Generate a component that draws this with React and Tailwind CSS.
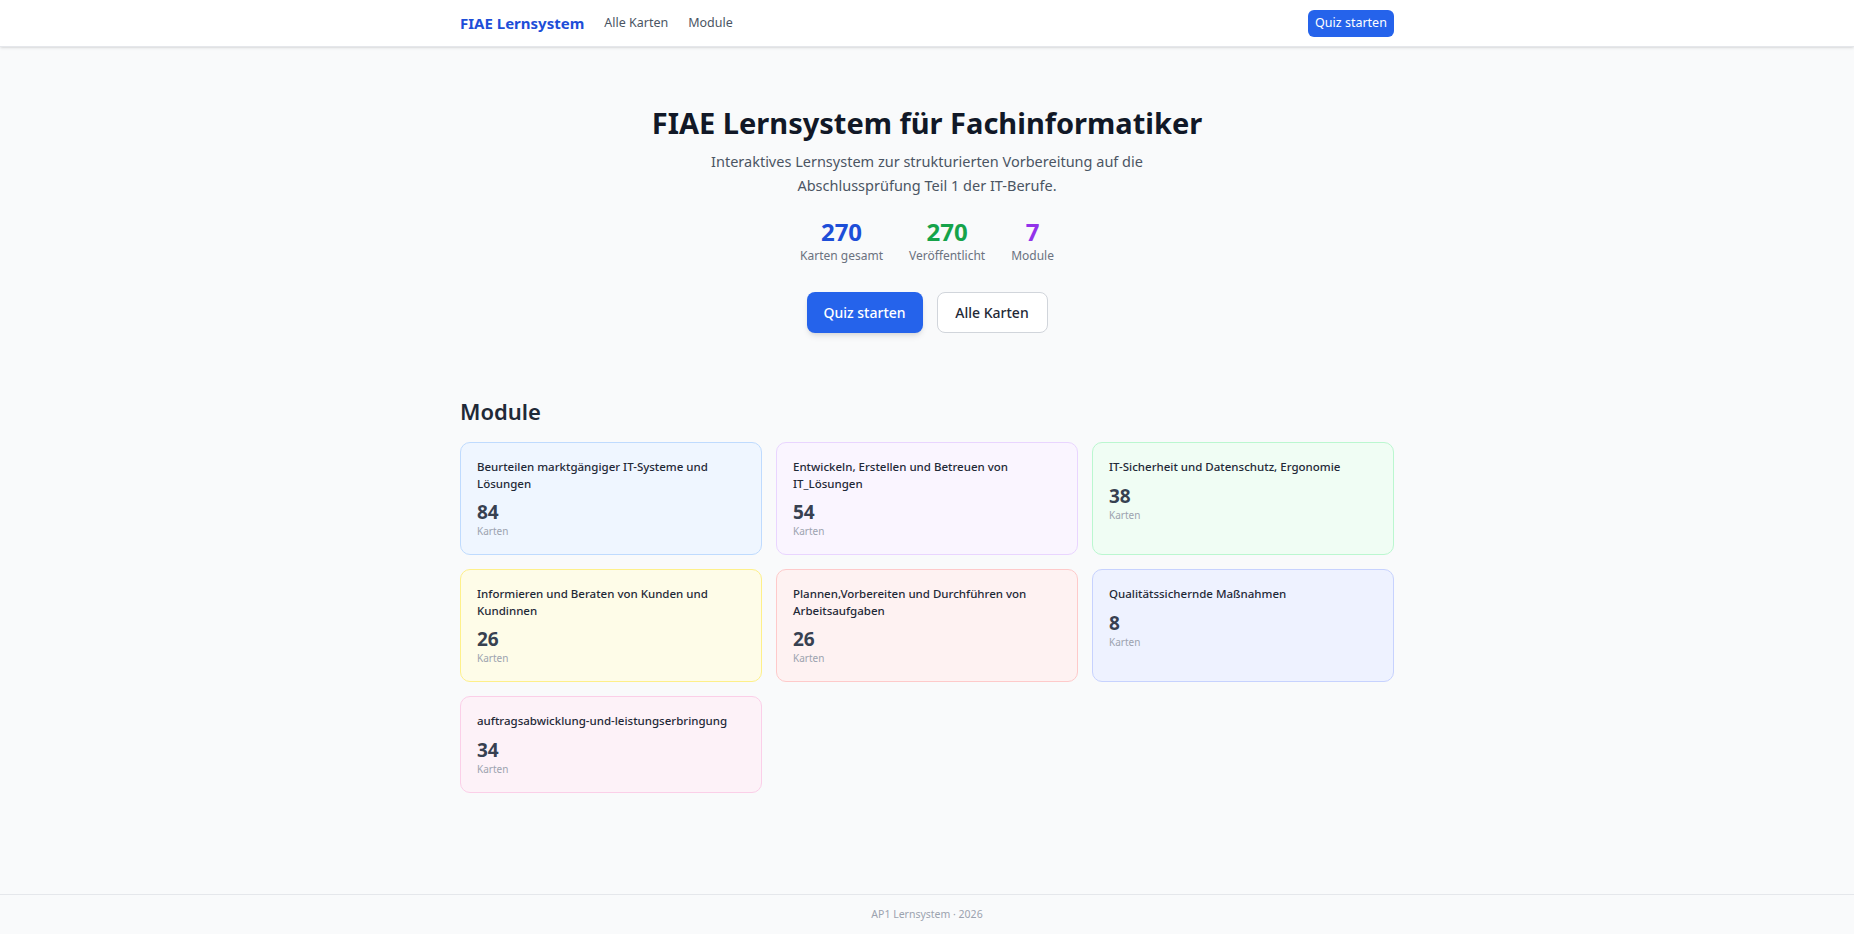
const MODULES = [
  {
    id: 'it-systeme',
    title: 'Beurteilen marktgängiger IT-Systeme und Lösungen',
    count: 84,
    tone: 'border-[#bfdbfe] bg-[#eff6ff]',
  },
  {
    id: 'it-loesungen',
    title: 'Entwickeln, Erstellen und Betreuen von IT_Lösungen',
    count: 54,
    tone: 'border-[#e9d5ff] bg-[#faf5ff]',
  },
  {
    id: 'sicherheit',
    title: 'IT-Sicherheit und Datenschutz, Ergonomie',
    count: 38,
    tone: 'border-[#bbf7d0] bg-[#f0fdf4]',
  },
  {
    id: 'beratung',
    title: 'Informieren und Beraten von Kunden und Kundinnen',
    count: 26,
    tone: 'border-[#fef08a] bg-[#fefce8]',
  },
  {
    id: 'arbeitsaufgaben',
    title: 'Plannen,Vorbereiten und Durchführen von Arbeitsaufgaben',
    count: 26,
    tone: 'border-[#fecaca] bg-[#fef2f2]',
  },
  {
    id: 'qualitaet',
    title: 'Qualitätssichernde Maßnahmen',
    count: 8,
    tone: 'border-[#c7d2fe] bg-[#eef2ff]',
  },
  {
    id: 'auftrag',
    title: 'auftragsabwicklung-und-leistungserbringung',
    count: 34,
    tone: 'border-[#fbcfe8] bg-[#fdf2f8]',
  },
]

const STATS = [
  { id: 'total', value: 270, label: 'Karten gesamt', color: 'text-[#1d4ed8]' },
  { id: 'published', value: 270, label: 'Veröffentlicht', color: 'text-[#16a34a]' },
  { id: 'modules', value: 7, label: 'Module', color: 'text-[#9333ea]' },
]

function Navbar() {
  return (
    <nav className="h-[47px] shrink-0 border-b border-[#e5e7eb] bg-white shadow-sm">
      <div className="mx-auto flex h-full w-[934px] items-center justify-between">
        <div className="flex items-center gap-5">
          <a href="#" className="text-[15px] font-bold text-[#1d4ed8]">
            FIAE Lernsystem
          </a>
          <a href="#" className="text-[12.5px] text-[#4b5563] hover:text-[#111827]">
            Alle Karten
          </a>
          <a href="#" className="text-[12.5px] text-[#4b5563] hover:text-[#111827]">
            Module
          </a>
        </div>
        <button
          type="button"
          className="h-[27px] w-[86px] rounded-md bg-[#2563eb] text-[12.5px] text-white hover:bg-[#1d4ed8]"
        >
          Quiz starten
        </button>
      </div>
    </nav>
  )
}

function Hero() {
  return (
    <section className="flex flex-col items-center pt-[58px] text-center">
      <h1 className="text-[29px] leading-[36px] font-bold text-[#111827]">
        FIAE Lernsystem für Fachinformatiker
      </h1>
      <p className="mt-[9px] max-w-[480px] text-[14.5px] leading-[23.5px] text-[#4b5563]">
        Interaktives Lernsystem zur strukturierten Vorbereitung auf die Abschlussprüfung Teil 1 der IT-Berufe.
      </p>

      <div className="mt-5 flex justify-center gap-[26px]">
        {STATS.map((s) => (
          <div key={s.id} className="flex flex-col items-center">
            <span className={`text-[24px] leading-[30px] font-bold ${s.color}`}>{s.value}</span>
            <span className="mt-px text-[12px] leading-4 text-[#6b7280]">{s.label}</span>
          </div>
        ))}
      </div>

      <div className="mt-7 flex justify-center gap-3.5">
        <button
          type="button"
          className="h-[41px] w-[116px] rounded-lg bg-[#2563eb] text-[14px] font-medium text-white shadow-md hover:bg-[#1d4ed8]"
        >
          Quiz starten
        </button>
        <button
          type="button"
          className="h-[41px] w-[111px] rounded-lg border border-[#d1d5db] bg-white text-[14px] font-medium text-[#1f2937] hover:bg-[#f9fafb]"
        >
          Alle Karten
        </button>
      </div>
    </section>
  )
}

function ModuleCard({ title, count, tone }) {
  return (
    <div className={`rounded-[10px] border p-4 ${tone}`}>
      <h3 className="text-[11.5px] leading-[16.5px] font-medium text-[#1f2937]">{title}</h3>
      <div className="mt-2 text-[19px] leading-6 font-bold text-[#374151]">{count}</div>
      <div className="text-[10px] leading-[14px] text-[#9ca3af]">Karten</div>
    </div>
  )
}

export default function App() {
  return (
    <div className="flex min-h-screen flex-col bg-[#f9fafb] font-['Noto_Sans',sans-serif]">
      <Navbar />
      <main className="flex-1">
        <Hero />
        <section className="mx-auto mt-[64px] w-[934px]">
          <h2 className="mb-[17px] text-[22px] leading-7 font-semibold text-[#1f2937]">Module</h2>
          <div className="grid grid-cols-3 gap-[14px]">
            {MODULES.map((m) => (
              <ModuleCard key={m.id} {...m} />
            ))}
          </div>
        </section>
      </main>
      <footer className="flex h-10 shrink-0 items-center justify-center border-t border-[#e5e7eb] text-[10.5px] text-[#9ca3af]">
        AP1 Lernsystem · 2026
      </footer>
    </div>
  )
}
